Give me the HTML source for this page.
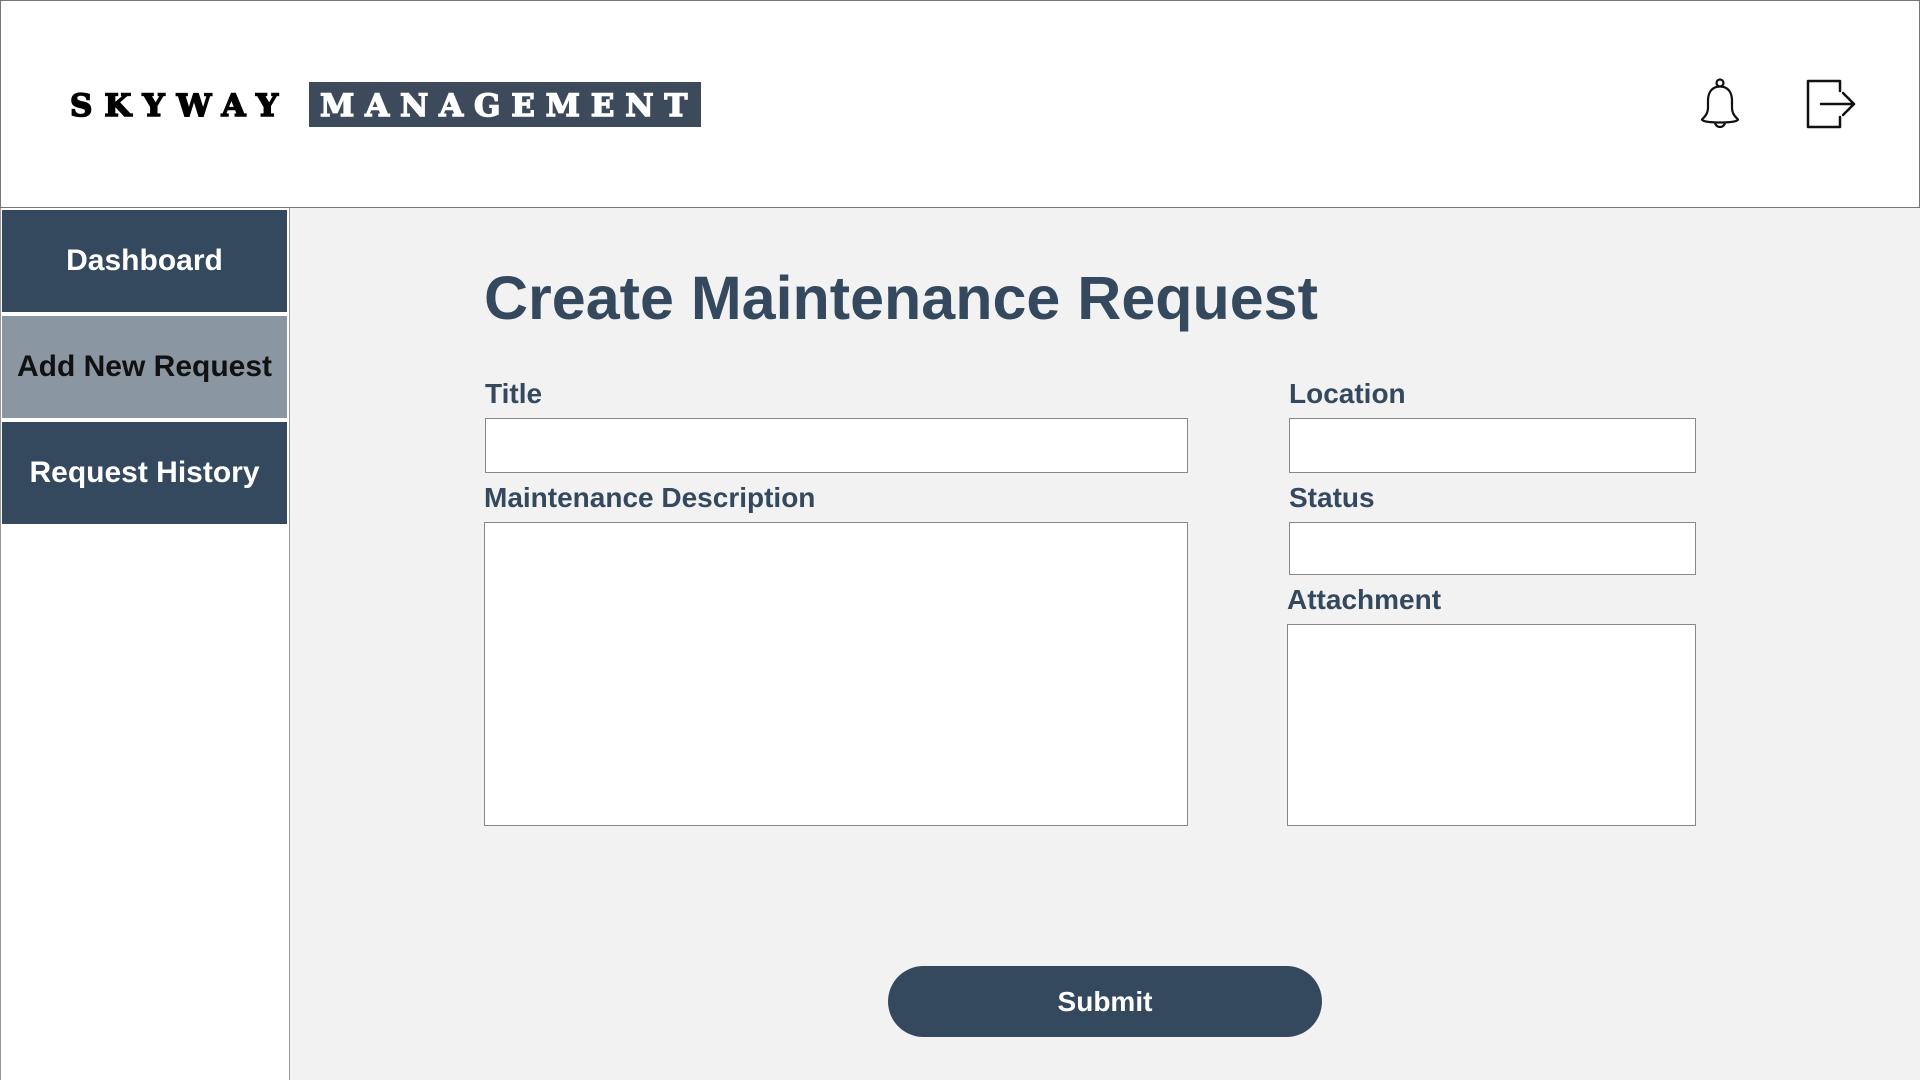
<!DOCTYPE html>
<html><head><style>
body{margin:0;width:1920px;height:1080px;background:#f2f2f2;font-family:"Liberation Sans",Helvetica,Arial,sans-serif;position:relative;overflow:hidden}
.hdr{position:absolute;left:0;top:0;width:1918px;height:206px;background:#fff;border:1px solid #777}
.logo1{position:absolute;left:70px;top:88px;font-family:"DejaVu Serif","Liberation Serif",serif;font-weight:bold;font-size:31px;letter-spacing:12px;color:#000;line-height:36px;-webkit-text-stroke:1.6px #000}
.logo2{position:absolute;left:309px;top:82px;width:392px;height:45px;background:#3d4a5c;color:#fff;font-family:"DejaVu Serif","Liberation Serif",serif;font-weight:bold;font-size:31px;letter-spacing:10.8px;line-height:48px;padding-left:11px;box-sizing:border-box;-webkit-text-stroke:1.4px #fff;white-space:nowrap;overflow:hidden}
.side{position:absolute;left:0;top:208px;width:288px;height:872px;background:#fff;border-right:1px solid #999;border-left:1px solid #999}
.btn{position:absolute;left:2px;width:285px;height:102px;background:#35495e;color:#fff;font-weight:bold;font-size:30px;text-align:center;line-height:102px}
.lbl{position:absolute;font-weight:bold;font-size:28px;color:#35495e}
.box{position:absolute;background:#fff;border:1px solid #888;box-sizing:border-box}
h1{position:absolute;left:484px;top:263px;margin:0;font-size:61px;color:#35495e;font-weight:bold}
.sub{position:absolute;left:888px;top:966px;width:434px;height:71px;border-radius:36px;background:#35495e;color:#fff;font-weight:bold;font-size:28px;text-align:center;line-height:71px}
</style></head><body>
<div class="hdr"></div>
<div class="logo1">SKYWAY</div>
<div class="logo2">MANAGEMENT</div>
<svg style="position:absolute;left:1694px;top:78px" width="52" height="52" viewBox="0 0 52 52" fill="none" stroke="#111" stroke-width="2.2">
<circle cx="26" cy="5" r="3.5"/>
<path d="M26 8.5c-8 0-12 6-12 14v7c0 6-3 9-6 12c0 2 8 3 18 3s18-1 18-3c-3-3-6-6-6-12v-7c0-8-4-14-12-14z"/>
<path d="M21 44a5 5 0 0 0 10 0"/>
</svg>
<svg style="position:absolute;left:1804px;top:78px" width="52" height="52" viewBox="0 0 52 52" fill="none" stroke="#111" stroke-width="2.5" stroke-linecap="round" stroke-linejoin="round">
<path d="M36 13V3H4v46h32v-10"/>
<path d="M17 26h33M39 15l11 11-11 11"/>
</svg>
<div class="side"></div>
<div class="btn" style="top:210px">Dashboard</div>
<div class="btn" style="top:316px;background:#8a96a1;color:#111">Add New Request</div>
<div class="btn" style="top:422px">Request History</div>
<h1>Create Maintenance Request</h1>
<div class="lbl" style="left:485px;top:378px">Title</div>
<div class="box" style="left:485px;top:418px;width:703px;height:55px"></div>
<div class="lbl" style="left:484px;top:482px">Maintenance Description</div>
<div class="box" style="left:484px;top:522px;width:704px;height:304px"></div>
<div class="lbl" style="left:1289px;top:378px">Location</div>
<div class="box" style="left:1289px;top:418px;width:407px;height:55px"></div>
<div class="lbl" style="left:1289px;top:482px">Status</div>
<div class="box" style="left:1289px;top:522px;width:407px;height:53px"></div>
<div class="lbl" style="left:1287px;top:584px">Attachment</div>
<div class="box" style="left:1287px;top:624px;width:409px;height:202px"></div>
<div class="sub">Submit</div>
</body></html>
